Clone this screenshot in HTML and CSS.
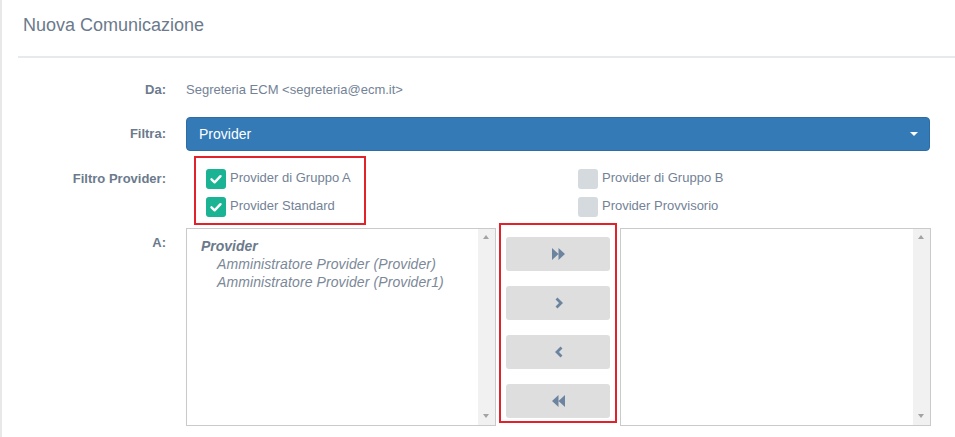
FILE: index.html
```html
<!DOCTYPE html>
<html lang="it">
<head>
<meta charset="utf-8">
<title>Nuova Comunicazione</title>
<link rel="stylesheet" href="styles.css">
</head>
<body>
<div class="page">
  <div class="panel">
    <h1 class="title">Nuova Comunicazione</h1>
    <div class="divider"></div>
    <form class="form">
      <div class="row row-da">
        <label class="lbl">Da:</label>
        <div class="val">Segreteria ECM &lt;segreteria@ecm.it&gt;</div>
      </div>
      <div class="row row-filtra">
        <label class="lbl">Filtra:</label>
        <div class="select">Provider<span class="caret"></span></div>
      </div>
      <div class="row row-filtro">
        <label class="lbl lbl-top">Filtro Provider:</label>
        <div class="checks">
          <div class="check-col">
            <div class="highlight highlight-checks">
              <div class="check"><span class="box on"><svg viewBox="0 0 20 20" width="20" height="20"><path d="M5.5 10.3 L8.6 13.3 L14.5 7.2" fill="none" stroke="#fff" stroke-width="2.4" stroke-linecap="round" stroke-linejoin="round"/></svg></span><span class="ctext">Provider di Gruppo A</span></div>
              <div class="check"><span class="box on"><svg viewBox="0 0 20 20" width="20" height="20"><path d="M5.5 10.3 L8.6 13.3 L14.5 7.2" fill="none" stroke="#fff" stroke-width="2.4" stroke-linecap="round" stroke-linejoin="round"/></svg></span><span class="ctext">Provider Standard</span></div>
            </div>
          </div>
          <div class="check-col check-col-right">
            <div class="check"><span class="box"></span><span class="ctext">Provider di Gruppo B</span></div>
            <div class="check"><span class="box"></span><span class="ctext">Provider Provvisorio</span></div>
          </div>
        </div>
      </div>
      <div class="row row-a">
        <label class="lbl lbl-a">A:</label>
        <div class="transfer">
          <div class="listbox">
            <div class="list-items">
              <div class="group">Provider</div>
              <div class="opt">Amministratore Provider (Provider)</div>
              <div class="opt">Amministratore Provider (Provider1)</div>
            </div>
            <div class="scrollbar"><span class="arr up"></span><span class="arr down"></span></div>
          </div>
          <div class="middle">
            <div class="highlight highlight-btns">
              <button type="button" class="btn"><svg width="13" height="12" viewBox="0 0 13 12"><path d="M0 0 L6.5 6 L0 12 Z M6.5 0 L13 6 L6.5 12 Z" fill="#6c84a0"/></svg></button>
              <button type="button" class="btn"><svg width="8" height="12" viewBox="0 0 8 12"><path d="M1.5 1.5 L6 6 L1.5 10.5" fill="none" stroke="#6c84a0" stroke-width="2.8"/></svg></button>
              <button type="button" class="btn"><svg width="8" height="12" viewBox="0 0 8 12"><path d="M6.5 1.5 L2 6 L6.5 10.5" fill="none" stroke="#6c84a0" stroke-width="2.8"/></svg></button>
              <button type="button" class="btn"><svg width="13" height="12" viewBox="0 0 13 12"><path d="M13 0 L6.5 6 L13 12 Z M6.5 0 L0 6 L6.5 12 Z" fill="#6c84a0"/></svg></button>
            </div>
          </div>
          <div class="listbox">
            <div class="list-items"></div>
            <div class="scrollbar"><span class="arr up"></span><span class="arr down"></span></div>
          </div>
        </div>
      </div>
    </form>
  </div>
</div>
</body>
</html>
```
FILE: styles.css
```css
* { box-sizing: border-box; }
html, body { margin: 0; padding: 0; background: #fff; }
body {
  font-family: "Liberation Sans", Arial, sans-serif;
  font-size: 13px;
  color: #6b7a8c;
}
.page {
  border-left: 2px solid #e8e8e8;
  min-height: 437px;
  overflow: hidden;
}
.panel {
  margin-left: 16px;
}
.title {
  margin: 0;
  padding: 15px 0 0 5px;
  font-size: 18px;
  line-height: 20px;
  font-weight: normal;
  color: #6b7a8c;
}
.divider {
  margin-top: 21px;
  height: 2px;
  background: #e7eaec;
}
.form {
  display: flex;
  flex-direction: column;
}
.row {
  display: grid;
  grid-template-columns: 148px 745px;
  column-gap: 20px;
}
.lbl {
  text-align: right;
  font-weight: bold;
  line-height: 20px;
  color: #6b7a8c;
}
.row-da { margin-top: 22px; align-items: center; }
.val { line-height: 20px; color: #738296; }
.row-filtra { margin-top: 17px; align-items: center; }
.select {
  width: 744px;
  height: 34px;
  background: #337ab7;
  border: 1px solid #2e6da4;
  border-radius: 4px;
  color: #fff;
  font-size: 14px;
  line-height: 32px;
  padding-left: 12px;
  position: relative;
}
.caret {
  position: absolute;
  right: 11px;
  top: 14px;
  width: 0;
  height: 0;
  border-left: 4px solid transparent;
  border-right: 4px solid transparent;
  border-top: 4px solid #fff;
}
.row-filtro { margin-top: 5px; }
.lbl-top { padding-top: 13px; }
.checks {
  display: grid;
  grid-template-columns: 372px 372px;
}
.check-col { display: flex; flex-direction: column; align-items: flex-start; }
.highlight { border: 2px solid #e2222b; }
.highlight-checks {
  margin-left: 8px;
  padding: 11px 13px 6px 10px;
  display: flex;
  flex-direction: column;
  gap: 8px;
}
.check-col-right {
  padding: 13px 0 0 20px;
  gap: 8px;
}
.check {
  display: flex;
  align-items: flex-start;
  height: 20px;
  gap: 4px;
}
.box {
  width: 20px;
  height: 20px;
  border-radius: 3px;
  background: #d5dadf;
  display: block;
}
.box.on { background: #1ab394; }
.box svg { display: block; }
.ctext { line-height: 18px; color: #738296; }
.row-a { margin-top: 3px; }
.lbl-a { padding-top: 5px; }
.transfer {
  display: grid;
  grid-template-columns: 310px 124px 311px;
  align-items: start;
}
.listbox {
  height: 198px;
  border: 1px solid #cacaca;
  display: flex;
}
.list-items {
  flex: 1;
  padding: 8px 0 0 14px;
  font-size: 14px;
  line-height: 18px;
  font-style: italic;
  color: #7b8898;
}
.group { font-weight: bold; color: #6b7a8c; }
.opt { padding-left: 16px; letter-spacing: 0.1px; }
.scrollbar {
  width: 17px;
  background: #f1f1f1;
  position: relative;
}
.arr {
  position: absolute;
  left: 5px;
  width: 0;
  height: 0;
  border-left: 3.5px solid transparent;
  border-right: 3.5px solid transparent;
}
.arr.up { top: 6px; border-bottom: 4px solid #a3a3a3; }
.arr.down { bottom: 7px; border-top: 4px solid #a3a3a3; }
.middle { display: flex; justify-content: center; }
.highlight-btns {
  margin-top: -5px;
  width: 118px;
  padding: 12px 5px 3px 5px;
  display: flex;
  flex-direction: column;
  gap: 15px;
}
.btn {
  width: 104px;
  height: 34px;
  border: 0;
  border-radius: 3px;
  background: #dedede;
  display: flex;
  align-items: center;
  justify-content: center;
  padding: 0;
  padding-left: 1px;
}
.btn svg { display: block; }
```
